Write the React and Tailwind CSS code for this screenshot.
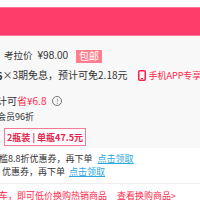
export default function App() {
  return (
    <div className="relative w-[200px] h-[200px] overflow-hidden bg-[#f8f8f8] text-[#333] font-['Noto_Sans_CJK_SC',sans-serif] text-[9px] leading-none">
      <div className="h-[7px] bg-white" />
      <div className="h-[29px] bg-[#ff3d6a] border-y border-[#ff7696]" />

      <div className="flex items-center h-[14px] mt-[13px] pl-[4px] text-[9.5px]">
        <span>考拉价</span>
        <span className="ml-[5px] text-[10px] font-['Liberation_Sans',sans-serif]">¥98.00</span>
        <span className="ml-[8px] h-[13px] px-[3px] flex items-center bg-[#ff7d8d] text-white text-[10px]">包邮</span>
      </div>

      <div className="flex items-center h-[14px] mt-[5px] whitespace-nowrap">
        <span className="-ml-[4px] font-bold text-[11px]">6</span>
        <span className="text-[10px]">×3期免息，预计可免2.18元</span>
        <span className="ml-[11px] flex items-center text-[#ff1f4b] text-[9px]">
          <svg width="8" height="11" viewBox="0 0 8 11" className="mr-[2px]">
            <rect x="0.75" y="0.75" width="6.5" height="9.5" rx="1" fill="none" stroke="currentColor" strokeWidth="1.5" />
            <rect x="3" y="8" width="2" height="1" fill="currentColor" />
          </svg>
          手机APP专享
        </span>
      </div>

      <div className="flex items-center h-[14px] mt-[12px] whitespace-nowrap text-[10px]">
        <span className="-ml-[3px]">计可</span>
        <span className="text-[#ff1f4b]">省¥6.8</span>
        <span className="ml-[6px] w-[10px] h-[10px] rounded-full border border-[#777] text-[7px] flex items-center justify-center text-[#777]">!</span>
      </div>

      <div className="h-[14px] mt-[1px] flex items-center whitespace-nowrap">
        <span className="-ml-[3px]">会员96折</span>
      </div>

      <div className="mt-[5px] ml-[4px] w-[82px] h-[18px] border border-[#f47a95] bg-white flex items-center justify-center text-[#e8224c] font-bold text-[9px] whitespace-nowrap">
        2瓶装 | 单瓶47.5元
      </div>

      <div className="mt-[2px] bg-white pt-[4px] pb-[5px] border-b border-[#eee]">
        <div className="flex items-center h-[13px] whitespace-nowrap">
          <span className="-ml-[1px]">槛8.8折优惠券，再下单</span>
          <span className="ml-[5px] text-[#2ea7e0] underline">点击领取</span>
        </div>
        <div className="flex items-center h-[13px] whitespace-nowrap">
          <span className="ml-[2px]">优惠券，再下单</span>
          <span className="ml-[4px] text-[#2ea7e0] underline">点击领取</span>
        </div>
      </div>

      <div className="bg-white h-[22px] flex items-center whitespace-nowrap text-[#ff1f4b]">
        <span className="-ml-[1px]">车，即可低价换购热销商品</span>
        <span className="ml-[10px]">查看换购商品&gt;</span>
      </div>
    </div>
  );
}
